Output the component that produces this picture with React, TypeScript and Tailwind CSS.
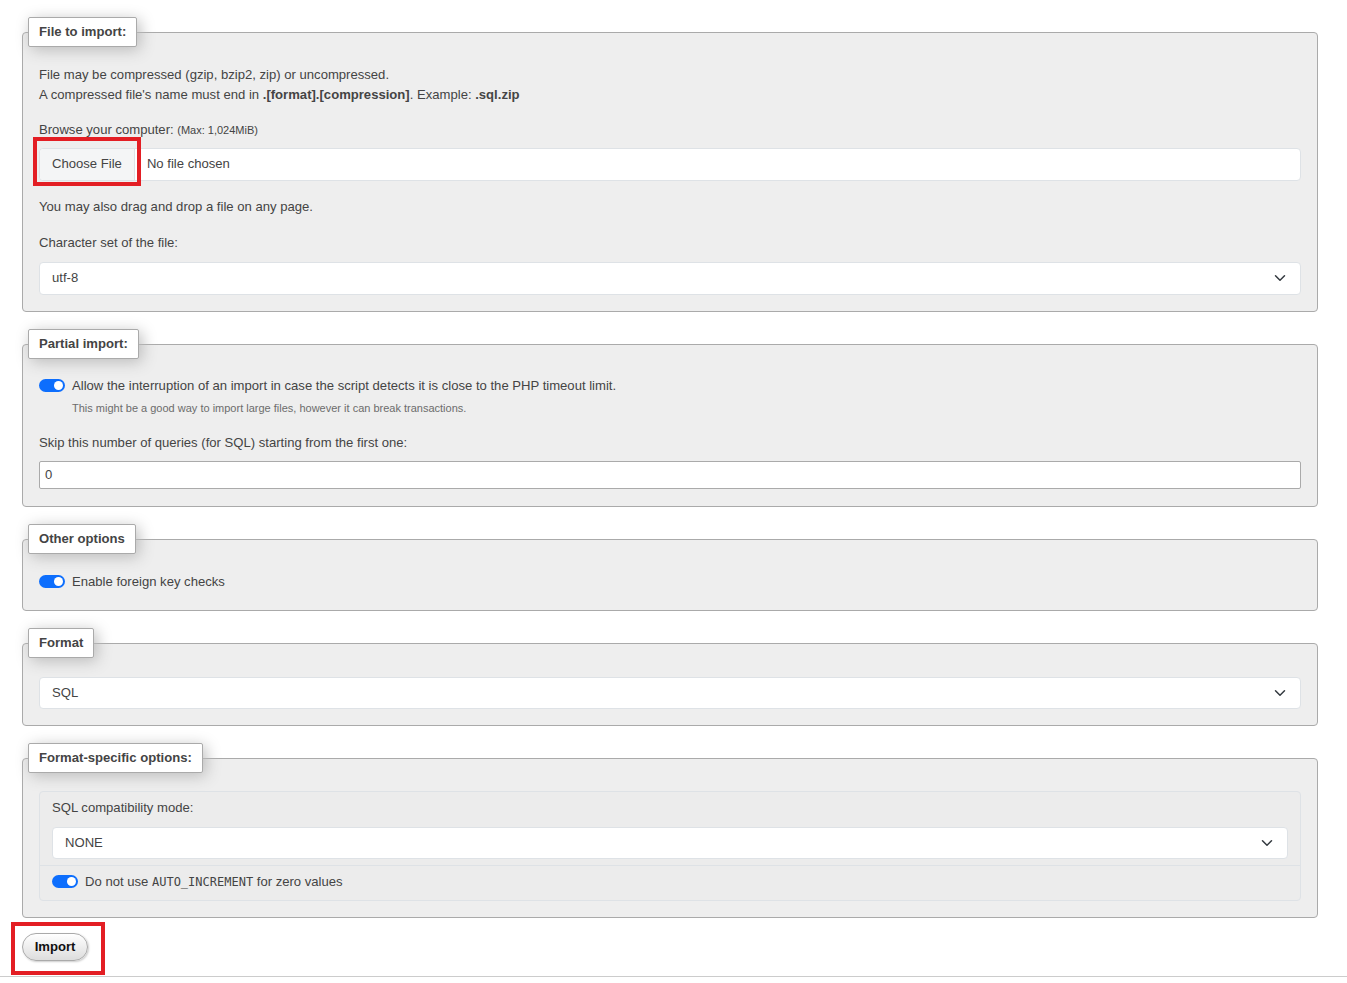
import React from "react";

function Chevron() {
  return (
    <svg width="16" height="12" viewBox="0 0 16 16" className="shrink-0">
      <path d="m2 5 6 6 6-6" fill="none" stroke="#343a40" strokeWidth="2" strokeLinecap="round" strokeLinejoin="round" />
    </svg>
  );
}

function Toggle() {
  return (
    <span className="inline-flex h-[13px] w-[26px] shrink-0 items-center justify-end rounded-full bg-[#0d6efd] pr-[2px]">
      <span className="h-[9px] w-[9px] rounded-full bg-white" />
    </span>
  );
}

function SelectBox({ value, tall }: { value: string; tall?: boolean }) {
  return (
    <div
      className={
        "flex items-center justify-between rounded-[4px] border border-[#dee2e6] bg-white pl-3 pr-3 " +
        (tall ? "h-[33px]" : "h-[32px]")
      }
    >
      <span>{value}</span>
      <Chevron />
    </div>
  );
}

function Fieldset({ title, children, className }: { title: string; children: React.ReactNode; className?: string }) {
  return (
    <div className={"rounded-[4px] border border-[#aaa] bg-[#eee] px-4 " + (className ?? "")}>
      <div className="-mt-[16px] -ml-[11px] block w-fit rounded-[2px] border border-[#aaa] bg-white px-[10px] py-[4px] font-bold leading-[20px] shadow-[3px_3px_15px_#bbb]">
        {title}
      </div>
      {children}
    </div>
  );
}

export default function App() {
  return (
    <div className="min-h-[983px] bg-white font-['Liberation_Sans',Arial,sans-serif] text-[13.1px] leading-[19.5px] text-[#444]">
      <div className="pt-[17px] pl-[22px] pr-[29px]">
        <Fieldset title="File to import:" className="mt-[15px] pb-4">
          <p className="mt-[18px]">File may be compressed (gzip, bzip2, zip) or uncompressed.</p>
          <p>
            A compressed file's name must end in <b>.[format].[compression]</b>. Example: <b>.sql.zip</b>
          </p>
          <p className="mt-4">
            Browse your computer: <span className="text-[11px]">(Max: 1,024MiB)</span>
          </p>
          <div className="mt-[7px] flex h-[33px] items-stretch rounded-[4px] border border-[#dee2e6] bg-white">
            <div className="relative flex items-center rounded-l-[4px] border-r border-[#dee2e6] bg-[#f4f5f6] px-3">
              Choose File
              <div className="absolute -top-[12px] -left-[7px] h-[49px] w-[108px] border-4 border-[#e31e24]" />
            </div>
            <div className="flex items-center pl-3">No file chosen</div>
          </div>
          <p className="mt-[16px]">You may also drag and drop a file on any page.</p>
          <p className="mt-[17px]">Character set of the file:</p>
          <div className="mt-[9px]">
            <SelectBox value="utf-8" tall />
          </div>
        </Fieldset>

        <Fieldset title="Partial import:" className="mt-[32px] pb-[17px]">
          <div className="mt-[17px] flex items-center gap-[7px]">
            <Toggle />
            <span>Allow the interruption of an import in case the script detects it is close to the PHP timeout limit.</span>
          </div>
          <p className="mt-[5px] pl-[33px] text-[11px] leading-[16px] text-[#6c6c6c]">
            This might be a good way to import large files, however it can break transactions.
          </p>
          <p className="mt-[17px]">Skip this number of queries (for SQL) starting from the first one:</p>
          <div className="mt-[8px] flex h-[28px] items-center rounded-[2px] border border-[#aaa] bg-white pl-[5px]">0</div>
        </Fieldset>

        <Fieldset title="Other options" className="mt-[32px] pb-[19px]">
          <div className="mt-[18px] flex items-center gap-[7px]">
            <Toggle />
            <span>Enable foreign key checks</span>
          </div>
        </Fieldset>

        <Fieldset title="Format" className="mt-[32px] pb-4">
          <div className="mt-[19px]">
            <SelectBox value="SQL" />
          </div>
        </Fieldset>

        <Fieldset title="Format-specific options:" className="mt-[32px] pb-4">
          <div className="mt-[18px] rounded-[4px] border border-[#dee2e6] bg-[#ececec]">
            <div className="px-3 pt-[6px] pb-[6px]">
              <p>SQL compatibility mode:</p>
              <div className="mt-[9px]">
                <SelectBox value="NONE" />
              </div>
            </div>
            <div className="flex items-center gap-[7px] border-t border-[#dee2e6] px-3 pt-[6px] pb-[8px]">
              <Toggle />
              <span>
                Do not use <code className="font-['DejaVu_Sans_Mono',monospace] text-[12px]">AUTO_INCREMENT</code> for zero values
              </span>
            </div>
          </div>
        </Fieldset>

        <div className="mt-[15px] pb-[15px]">
          <button className="relative h-[28px] w-[66px] rounded-full border border-[#aaa] bg-gradient-to-b from-white to-[#ddd] font-bold text-[#111] shadow-[1px_1px_2px_#ccc]">
            Import
            <span className="absolute -top-[12px] -left-[12px] h-[53px] w-[94px] border-4 border-[#e31e24]" />
          </button>
        </div>
      </div>
      <div className="border-t border-[#ccc]" />
    </div>
  );
}
